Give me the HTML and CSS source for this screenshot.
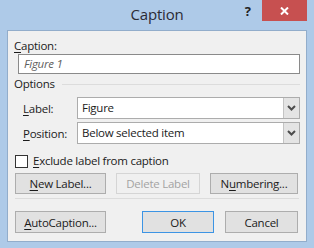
FILE: index.html
```html
<!doctype html>
<html>
<head>
    <meta charset="utf-8">
    <title>Caption</title>
    <link rel="stylesheet" href="styles.css">
</head>
<body>
<div class="window">
    <div class="titlebar">
        <span class="title">Caption</span>
        <span class="help">?</span>
        <span class="close">
            <svg width="9" height="8" viewBox="0 0 9 8">
                <path d="M1 0.5 L8 7.5 M8 0.5 L1 7.5" stroke="#fff" stroke-width="2"/>
            </svg>
        </span>
    </div>
    <div class="client">
        <div class="field-label"><u>C</u>aption:</div>
        <div class="textbox">Figure 1</div>

        <div class="group">
            <span class="group-name">Options</span>
            <span class="group-line"></span>
        </div>

        <div class="opt-row">
            <span class="opt-label"><u>L</u>abel:</span>
            <div class="combo">
                <span class="combo-text">Figure</span>
                <span class="drop">
                    <svg width="9" height="6" viewBox="0 0 9 6"><path d="M1 1 L4.5 4.5 L8 1" fill="none" stroke="#4d4d4d" stroke-width="2"/></svg>
                </span>
            </div>
        </div>
        <div class="opt-row">
            <span class="opt-label"><u>P</u>osition:</span>
            <div class="combo">
                <span class="combo-text">Below selected item</span>
                <span class="drop">
                    <svg width="9" height="6" viewBox="0 0 9 6"><path d="M1 1 L4.5 4.5 L8 1" fill="none" stroke="#4d4d4d" stroke-width="2"/></svg>
                </span>
            </div>
        </div>

        <div class="check">
            <span class="box"></span>
            <span><u>E</u>xclude label from caption</span>
        </div>

        <div class="btn-row top-row">
            <button class="btn wide"><u>N</u>ew Label...</button>
            <button class="btn mid" disabled>Delete Label</button>
            <button class="btn num">N<u>u</u>mbering...</button>
        </div>

        <div class="sep"></div>

        <div class="btn-row bottom-row">
            <button class="btn wide"><u>A</u>utoCaption...</button>
            <button class="btn ok">OK</button>
            <button class="btn cancel">Cancel</button>
        </div>
    </div>
</div>
</body>
</html>
```

FILE: styles.css
```css
html, body {
    margin: 0;
    padding: 0;
}

body {
    font-family: "Open Sans", "Liberation Sans", sans-serif;
    font-size: 11.5px;
    letter-spacing: -0.25px;
    color: #1b1b1b;
}

u {
    text-decoration: underline;
    text-underline-offset: 2px;
}

.window {
    width: 314px;
    height: 248px;
    background: #aecae8;
    display: flex;
    flex-direction: column;
}

.titlebar {
    height: 30px;
    display: grid;
    letter-spacing: 0;
}

.titlebar > * {
    grid-area: 1 / 1;
}

.title {
    justify-self: center;
    align-self: start;
    margin-top: 4px;
    font-size: 15px;
    line-height: 20px;
    letter-spacing: -0.2px;
    color: #2b2b35;
}

.help {
    justify-self: end;
    align-self: start;
    margin-right: 63px;
    margin-top: 2px;
    font-weight: bold;
    font-size: 13px;
    line-height: 18px;
    color: #222;
}

.close {
    justify-self: end;
    align-self: start;
    margin-right: 7px;
    width: 45px;
    height: 21px;
    background: #c75050;
    display: flex;
    align-items: center;
    justify-content: center;
}

.client {
    margin: 0 7px 6px 7px;
    border: 1px solid #92adcb;
    background: #f0f0f0;
    flex: 1;
    padding: 7px 6px 0 6px;
    display: flex;
    flex-direction: column;
}

.field-label {
    line-height: 16px;
}

.textbox {
    margin-left: 4px;
    height: 18px;
    border: 1px solid #8a8a8a;
    background: #fff;
    font-style: italic;
    color: #5f5f5f;
    line-height: 18px;
    padding-left: 5px;
}

.group {
    margin-top: 2px;
    display: flex;
    align-items: center;
    line-height: 16px;
}

.group-line {
    flex: 1;
    height: 1px;
    background: #dcdcdc;
    margin-left: 7px;
}

.opt-row {
    display: flex;
    align-items: center;
    margin-top: 5px;
    padding-left: 9px;
}

.opt-row + .opt-row {
    margin-top: 3px;
}

.opt-label {
    width: 54px;
}

.combo {
    flex: 1;
    height: 20px;
    border: 1px solid #acacac;
    background: #fff;
    display: flex;
}

.combo-text {
    flex: 1;
    line-height: 20px;
    padding-left: 4px;
}

.drop {
    width: 15px;
    background: #e4e4e4;
    border-left: 1px solid #c4c4c4;
    display: flex;
    align-items: center;
    justify-content: center;
}

.check {
    display: flex;
    align-items: center;
    margin-top: 9px;
    margin-left: 1px;
    line-height: 16px;
}

.box {
    width: 11px;
    height: 11px;
    border: 1px solid #333;
    background: #fff;
    margin-right: 5px;
}

.btn-row {
    display: flex;
    gap: 10px;
    margin-left: 1px;
}

.top-row {
    margin-top: 4px;
}

.bottom-row {
    margin-top: 12px;
}

.btn {
    height: 21px;
    padding: 0;
    font: inherit;
    letter-spacing: inherit;
    color: #1b1b1b;
    background: #e1e1e1;
    border: 1px solid #adadad;
}

.bottom-row .btn {
    height: 22px;
}

.btn:disabled {
    color: #a3a3a3;
    background: #f0f0f0;
    border-color: #d5d5d5;
}

.wide {
    width: 91px;
}

.mid {
    width: 84px;
}

.num {
    width: 88px;
}

.ok {
    width: 72px;
    margin-left: 26px;
    border-color: #3c94e4;
}

.cancel {
    width: 73px;
    margin-left: 1px;
}

.sep {
    margin-top: 4px;
    margin-left: 1px;
    margin-right: 1px;
    height: 1px;
    background: #dcdcdc;
}
```
